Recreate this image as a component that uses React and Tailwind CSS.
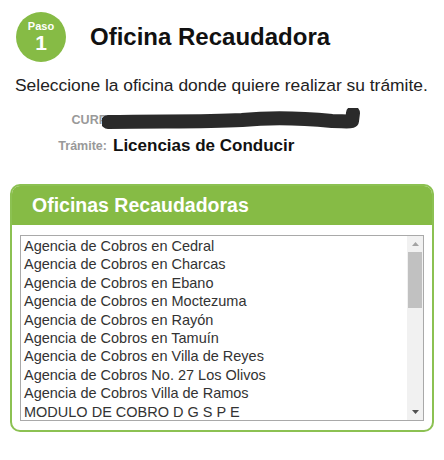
const OFICINAS = [
  "Agencia de Cobros en Cedral",
  "Agencia de Cobros en Charcas",
  "Agencia de Cobros en Ebano",
  "Agencia de Cobros en Moctezuma",
  "Agencia de Cobros en Rayón",
  "Agencia de Cobros en Tamuín",
  "Agencia de Cobros en Villa de Reyes",
  "Agencia de Cobros No. 27 Los Olivos",
  "Agencia de Cobros Villa de Ramos",
  "MODULO DE COBRO D G S P E",
];

export default function App() {
  return (
    <div
      className="h-[460px] w-[444px] overflow-hidden bg-white"
      style={{ fontFamily: '"Liberation Sans", Arial, sans-serif' }}
    >
      {/* Paso + title */}
      <div className="flex h-[50px] items-center pl-[16px] mt-[12px]">
        <div className="flex h-[50px] w-[50px] flex-col items-center justify-center rounded-full bg-[#86bb45] text-white">
          <span className="text-[11px] font-bold leading-[12px]">Paso</span>
          <span className="text-[21px] font-bold leading-[22px]">1</span>
        </div>
        <h1 className="ml-[24px] text-[24px] font-bold leading-[28px] text-[#111]">Oficina Recaudadora</h1>
      </div>

      <p className="mt-[13px] pl-[15px] text-[17.4px] leading-[20px] whitespace-nowrap text-[#222]">
        Seleccione la oficina donde quiere realizar su trámite.
      </p>

      <div className="mt-[13px] grid grid-cols-[107px_1fr] items-center gap-y-[4px]">
        <span className="text-right text-[12.5px] font-bold text-[#999]">CURP</span>
        <svg width="262" height="24" viewBox="0 0 262 24" className="-ml-[5px]">
          <path
            d="M6 14 C60 13 100 14 140 12 C170 9 200 10 230 13 C240 13 246 14 250 13 L251 5"
            stroke="#2a2a2a"
            strokeWidth="14"
            strokeLinecap="round"
            strokeLinejoin="round"
            fill="none"
          />
        </svg>
        <span className="text-right text-[12.5px] font-bold leading-[20px] text-[#999]">Trámite:</span>
        <span className="pl-[6px] text-[17px] font-bold leading-[20px] text-[#111]">Licencias de Conducir</span>
      </div>

      {/* Panel */}
      <div className="mx-[10px] mt-[28px] overflow-hidden rounded-[10px] border-2 border-[#8cc152] bg-white">
        <div className="flex h-[39px] items-center bg-[#86bb45] pl-[20px]">
          <span className="text-[19.5px] font-bold text-white">Oficinas Recaudadoras</span>
        </div>
        <div className="px-[8px] pt-[10px] pb-[9px]">
          <div className="flex h-[186px] border border-[#a9a9a9] bg-white">
            <ul className="flex-1 pl-[3px] pt-[1px] text-[14.5px] leading-[18.4px] text-[#333]">
              {OFICINAS.map((o) => (
                <li key={o}>{o}</li>
              ))}
            </ul>
            <div className="flex w-[16px] flex-col bg-[#f1f1f1]">
              <div className="flex h-[16px] items-center justify-center">
                <svg width="7" height="4" viewBox="0 0 7 4">
                  <path d="M0 4 L3.5 0 L7 4 Z" fill="#a3a3a3" />
                </svg>
              </div>
              <div className="mx-[1px] h-[56px] bg-[#c1c1c1]" />
              <div className="flex-1" />
              <div className="flex h-[16px] items-center justify-center">
                <svg width="7" height="4" viewBox="0 0 7 4">
                  <path d="M0 0 L7 0 L3.5 4 Z" fill="#505050" />
                </svg>
              </div>
            </div>
          </div>
        </div>
      </div>
    </div>
  );
}
